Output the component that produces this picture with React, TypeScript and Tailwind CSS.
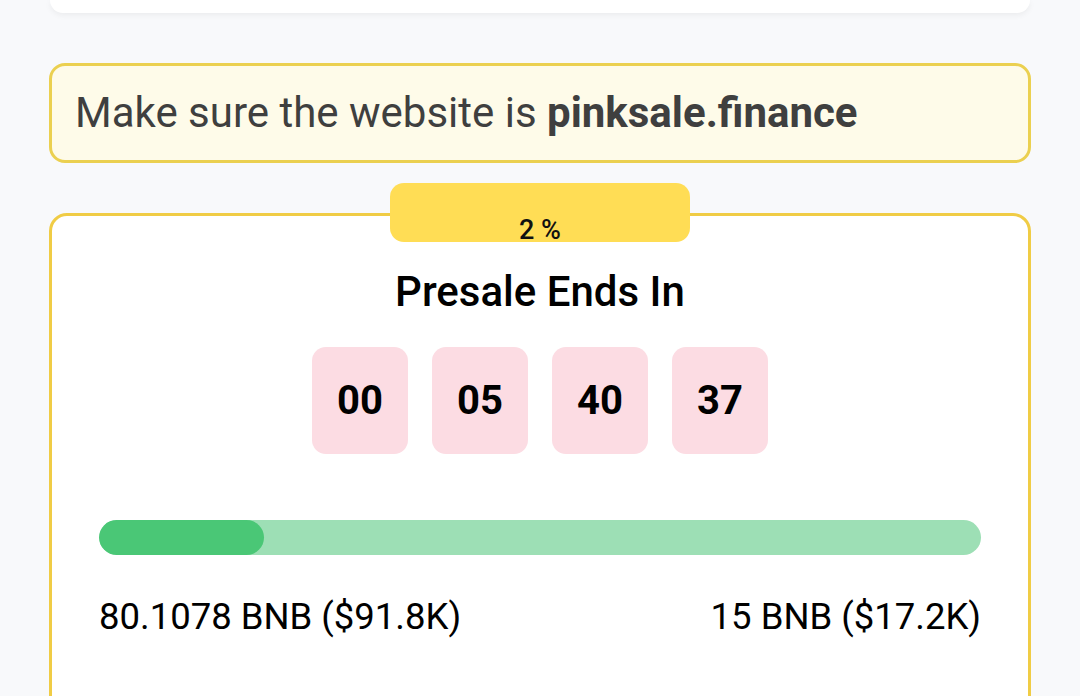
import React from "react";

export default function App() {
  const digits = ["00", "05", "40", "37"];
  return (
    <div className="w-[1080px] h-[696px] overflow-hidden bg-[#f8f9fb]" style={{ fontFamily: "Roboto, 'Liberation Sans', sans-serif" }}>
      <div className="mx-[50px] h-[13px] bg-white rounded-b-[18px] shadow-[0_2px_6px_rgba(0,0,0,0.06)]" />
      <div className="mx-[49px] mt-[50px] h-[100px] border-[3px] border-[#ebd050] bg-[#fefbe9] rounded-[16px] flex items-center px-[23px] pb-[2px]">
        <p className="text-[42px] leading-[63px] text-[#3f3f3f]">
          Make sure the website is <span className="font-bold">pinksale.finance</span>
        </p>
      </div>
      <div className="relative mx-[49px] mt-[50px] h-[600px] border-[3px] border-[#f0cc45] bg-white rounded-[18px] px-[47px]">
        <div className="absolute left-1/2 -translate-x-1/2 top-[-33px] w-[300px] h-[59px] bg-[#ffdd55] rounded-[14px] flex items-start justify-center pt-[34px]">
          <span className="text-[27px] leading-none font-medium text-[#111]">2 %</span>
        </div>
        <div className="pt-[50px] text-center text-[42px] font-medium text-black leading-[52px]">Presale Ends In</div>
        <div className="mt-[29px] flex justify-center gap-[24px]">
          {digits.map((d) => (
            <div key={d} className="w-[96px] h-[107px] rounded-[14px] bg-[#fcdce3] flex items-center justify-center text-[40px] leading-none font-bold text-black">
              {d}
            </div>
          ))}
        </div>
        <div className="mt-[66px] h-[35px] rounded-full bg-[#9ddfb5] overflow-hidden">
          <div className="h-full w-[165px] rounded-full bg-[#4ac776]" />
        </div>
        <div className="mt-[42px] flex justify-between text-[36.5px] text-black leading-[40px]">
          <span>80.1078 BNB ($91.8K)</span>
          <span>15 BNB ($17.2K)</span>
        </div>
      </div>
    </div>
  );
}
